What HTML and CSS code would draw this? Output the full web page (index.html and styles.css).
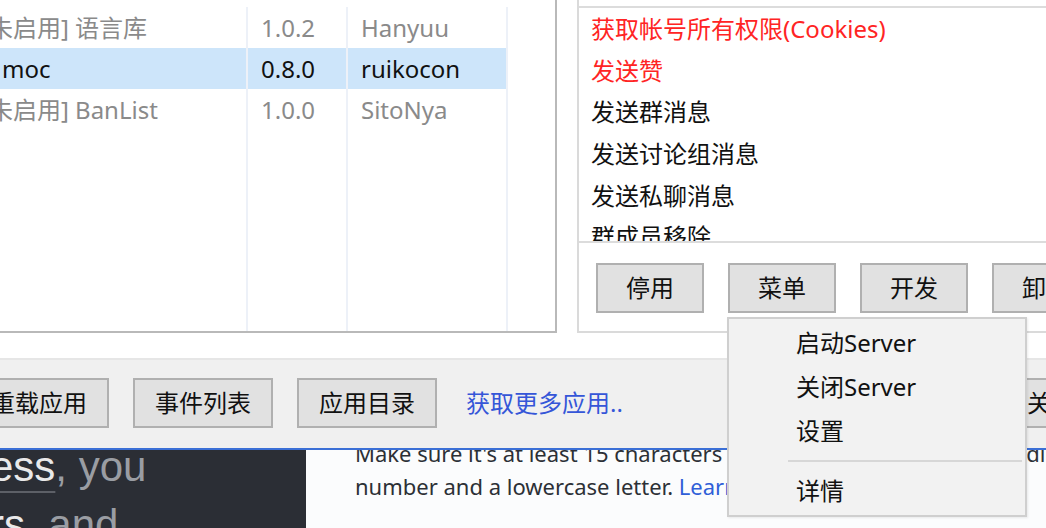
FILE: index.html
```html
<!DOCTYPE html>
<html lang="zh-CN">
<head>
<meta charset="utf-8">
<title>应用管理</title>
<link rel="stylesheet" href="styles.css">
</head>
<body>
<div class="screen">
  <div class="top">
    <div class="plugins">
      <div class="prow muted">
        <div class="cell name">[未启用] 语言库</div>
        <div class="cell ver">1.0.2</div>
        <div class="cell author">Hanyuu</div>
        <div class="cell rest"></div>
      </div>
      <div class="prow selected">
        <div class="cell name enabled">moc</div>
        <div class="cell ver">0.8.0</div>
        <div class="cell author">ruikocon</div>
        <div class="cell rest"></div>
      </div>
      <div class="prow muted">
        <div class="cell name">[未启用] BanList</div>
        <div class="cell ver">1.0.0</div>
        <div class="cell author">SitoNya</div>
        <div class="cell rest"></div>
      </div>
      <div class="prow filler">
        <div class="cell name"></div>
        <div class="cell ver"></div>
        <div class="cell author"></div>
        <div class="cell rest"></div>
      </div>
    </div>
    <div class="detail">
      <div class="perms">
        <div class="perm danger">获取帐号所有权限(Cookies)</div>
        <div class="perm danger">发送赞</div>
        <div class="perm">发送群消息</div>
        <div class="perm">发送讨论组消息</div>
        <div class="perm">发送私聊消息</div>
        <div class="perm">群成员移除</div>
      </div>
      <div class="actions">
        <button class="btn act">停用</button>
        <button class="btn act">菜单</button>
        <button class="btn act">开发</button>
        <button class="btn act">卸载</button>
      </div>
    </div>
  </div>
  <div class="toolbar">
    <button class="btn tool first">重载应用</button>
    <button class="btn tool">事件列表</button>
    <button class="btn tool">应用目录</button>
    <a class="more" href="#">获取更多应用..</a>
    <button class="btn tool close">关闭</button>
  </div>
  <div class="web">
    <div class="web-side">
      <p class="hero"><span class="strong">ess</span>, you<br><span class="strong2">rs</span>, and</p>
    </div>
    <div class="web-main">
      <p class="hint">Make sure it's at least 15 characters OR at least 8 characters including a<br>number and a lowercase letter. <a href="#" class="learn">Learn more</a>.</p>
    </div>
  </div>
  <div class="menu">
    <div class="mitem">启动Server</div>
    <div class="mitem">关闭Server</div>
    <div class="mitem">设置</div>
    <div class="msep"></div>
    <div class="mitem">详情</div>
  </div>
</div>
</body>
</html>
```

FILE: styles.css
```css
* { box-sizing: border-box; }
html, body { margin: 0; padding: 0; }
body {
  width: 1046px;
  height: 528px;
  overflow: hidden;
  background: #ffffff;
  font-family: "Noto Sans", "Noto Sans CJK SC", sans-serif;
  font-size: 24px;
  color: #111111;
}
.screen {
  position: relative;
  width: 1046px;
  height: 528px;
  overflow: hidden;
  display: flex;
  flex-direction: column;
}

/* ---------- top area ---------- */
.top {
  height: 358px;
  display: flex;
  flex: none;
  background: #ffffff;
}
.plugins {
  margin-left: -40px;
  width: 597px;
  height: 333px;
  flex: none;
  padding-top: 7px;
  border-right: 2px solid #b9b9b9;
  border-bottom: 2px solid #b9b9b9;
  display: flex;
  flex-direction: column;
  background: #ffffff;
}
.prow {
  display: flex;
  height: 41px;
  line-height: 41px;
  flex: none;
  white-space: nowrap;
}
.prow.filler { flex: 1; }
.prow.muted { color: #8a8a8a; }
.prow.selected { color: #111111; }
.prow.selected .name,
.prow.selected .ver,
.prow.selected .author { background: #cde5fa; }
.cell {
  border-right: 2px solid #edf1f8;
  overflow: hidden;
  flex: none;
}
.cell.name { width: 288px; padding-left: 21px; }
.cell.name.enabled { padding-left: 42px; }
.cell.ver { width: 100px; padding-left: 13px; }
.cell.author { width: 160px; padding-left: 13px; }
.cell.rest { flex: 1; border-right: none; }

.detail {
  margin-left: 20px;
  width: 640px;
  flex: none;
  height: 333px;
  border-left: 2px solid #dadada;
  border-bottom: 2px solid #dadada;
}
.perms {
  margin-top: 6px;
  height: 237px;
  border-top: 2px solid #dcdcdc;
  border-bottom: 2px solid #dcdcdc;
  padding-left: 12px;
  overflow: hidden;
}
.perm {
  height: 41.7px;
  line-height: 41.7px;
  white-space: nowrap;
  color: #111111;
}
.perm.danger { color: #ff2424; }
.actions {
  display: flex;
  gap: 24px;
  padding: 20px 0 0 17px;
}
.btn {
  font-family: "Noto Sans", "Noto Sans CJK SC", sans-serif;
  font-size: 24px;
  color: #111111;
  background: #e1e1e1;
  border: 2px solid #b0b0b0;
  border-radius: 0;
  padding: 0;
  height: 50px;
  line-height: 44px;
  flex: none;
}
.btn.act { width: 108px; }

/* ---------- toolbar ---------- */
.toolbar {
  height: 90px;
  flex: none;
  margin-right: -120px;
  background: #f0f0f0;
  border-top: 2px solid #e6e6e6;
  display: flex;
  align-items: flex-start;
  gap: 24px;
  padding-top: 18px;
}
.btn.tool { width: 140px; }
.btn.tool.first { margin-left: -31px; }
.more {
  margin-left: 5px;
  height: 50px;
  line-height: 50px;
  color: #3556d8;
  text-decoration: none;
  white-space: nowrap;
}
.btn.tool.close { margin-left: auto; margin-right: 45px; }

/* ---------- web content below ---------- */
.web {
  flex: 1;
  display: flex;
  border-top: 2px solid #3b6fd6;
  overflow: hidden;
}
.web-side {
  width: 306px;
  flex: none;
  background: #2b2e35;
  overflow: hidden;
}
.hero {
  margin: -12px 0 0 -10px;
  font-family: "Liberation Sans", Arial, sans-serif;
  font-size: 42px;
  line-height: 58px;
  color: #9a9da3;
  white-space: nowrap;
}
.hero .strong {
  color: #e9e9ea;
  text-decoration: underline;
  text-decoration-color: #5d6067;
  text-decoration-thickness: 2px;
  text-underline-offset: 10px;
}
.hero .strong2 { color: #e9e9ea; }
.web-main {
  flex: 1;
  background: #fbfcfd;
  overflow: hidden;
  padding-left: 49px;
}
.hint {
  margin: -13px 0 0 0;
  font-family: "Noto Sans", sans-serif;
  font-size: 22px;
  line-height: 33px;
  color: #2c3036;
  white-space: nowrap;
}
.learn { color: #2f5fd8; text-decoration: none; }

/* ---------- context menu ---------- */
.menu {
  position: absolute;
  left: 727px;
  top: 317px;
  width: 300px;
  height: 200px;
  background: #f2f2f2;
  border: 2px solid #cfcfcf;
  padding-top: 2px;
  box-shadow: 1px 1px 2px rgba(0,0,0,0.08);
}
.mitem {
  height: 44px;
  line-height: 44px;
  padding-left: 67px;
  color: #111111;
  white-space: nowrap;
}
.msep {
  height: 16px;
  margin: 0 3px 0 59px;
  display: flex;
  align-items: center;
}
.msep::before {
  content: "";
  display: block;
  width: 100%;
  height: 2px;
  background: #d7d7d7;
}
```
